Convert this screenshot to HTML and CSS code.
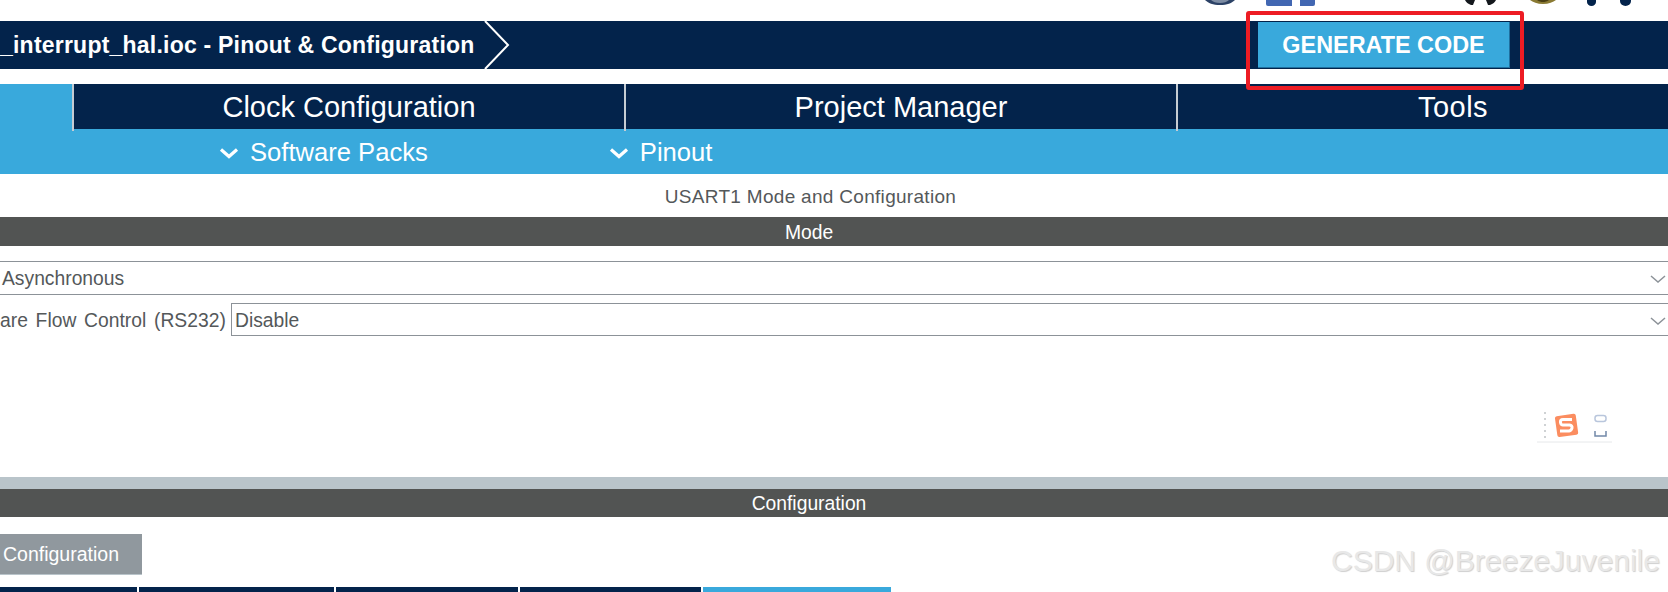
FILE: index.html
```html
<!DOCTYPE html>
<html lang="en">
<head>
<meta charset="utf-8">
<title>Pinout &amp; Configuration</title>
<link rel="stylesheet" href="styles.css">
</head>
<body>
<div class="page">
  <div class="top-icons">
    <svg class="ic ic-globe" width="30" height="5" viewBox="0 0 30 5"><path d="M0 0h30c-3 3-8 5-15 5S3 3 0 0z" fill="#2c4266"/><path d="M6 0h18c-2 2-5 3-9 3S8 2 6 0z" fill="#7d8ca3"/></svg>
    <svg class="ic ic-fb" width="49" height="6" viewBox="0 0 49 6"><path d="M0 0h26v6H2a2 2 0 0 1-2-2z" fill="#4267b2"/><path d="M34 0h15v4a2 2 0 0 1-2 2H34z" fill="#4267b2"/></svg>
    <svg class="ic ic-black" width="31" height="5" viewBox="0 0 31 5"><path d="M0 0h10L8 5H6C3 4 1 2 0 0z" fill="#14181d"/><path d="M31 0H21l2 5h2c3-1 5-3 6-5z" fill="#14181d"/></svg>
    <svg class="ic ic-gold" width="26" height="4" viewBox="0 0 26 4"><path d="M0 0h26c-3 2-7 4-13 4S3 2 0 0z" fill="#8a7a33"/><path d="M7 0h12c-2 1.500-4 2-6 2S9 1.500 7 0z" fill="#4a3f14"/></svg>
    <svg class="ic ic-dots" width="44" height="6" viewBox="0 0 44 6"><path d="M0 0h9v2a4.500 4 0 0 1-9 0z" fill="#03234b"/><path d="M33 0h11v1a5.500 5 0 0 1-11 0z" fill="#03234b"/></svg>
  </div>

  <header class="title-bar">
    <div class="crumb">_interrupt_hal.ioc - Pinout &amp; Configuration</div>
    <svg class="crumb-arrow" width="26" height="48" viewBox="0 0 26 48"><path d="M1 0l23 24L1 48" fill="none" stroke="#fff" stroke-width="2"/></svg>
    <button class="generate">GENERATE CODE</button>
  </header>

  <nav class="tabs">
    <div class="tab-active"></div>
    <div class="tab">Clock Configuration</div>
    <div class="tab">Project Manager</div>
    <div class="tab tab-tools">Tools</div>
  </nav>

  <div class="subnav">
    <div class="subnav-item sub-packs">
      <svg width="20" height="12" viewBox="0 0 20 12"><path d="M2 2.500l8 7 8-7" fill="none" stroke="#fff" stroke-width="3.200"/></svg>
      <span>Software Packs</span>
    </div>
    <div class="subnav-item sub-pinout">
      <svg width="20" height="12" viewBox="0 0 20 12"><path d="M2 2.500l8 7 8-7" fill="none" stroke="#fff" stroke-width="3.200"/></svg>
      <span>Pinout</span>
    </div>
  </div>

  <div class="panel-title">USART1 Mode and Configuration</div>
  <div class="section-bar">Mode</div>

  <div class="mode-body">
    <div class="select select-mode">
      <span>Asynchronous</span>
      <svg class="select-chev" width="16" height="8" viewBox="0 0 16 8"><path d="M1 1l7 6 7-6" fill="none" stroke="#8c9298" stroke-width="1.500"/></svg>
    </div>
    <div class="field-row">
      <label class="field-label">are Flow Control (RS232)</label>
      <div class="select select-flow">
        <span>Disable</span>
        <svg class="select-chev" width="16" height="8" viewBox="0 0 16 8"><path d="M1 1l7 6 7-6" fill="none" stroke="#8c9298" stroke-width="1.500"/></svg>
      </div>
    </div>
    <div class="ime-widget">
      <svg width="78" height="32" viewBox="0 0 78 32">
        <path d="M8 1v30" stroke="#cfd2d4" stroke-width="2" stroke-dasharray="2 4" fill="none"/>
        <path d="M0 31h75" stroke="#e6e8ea" stroke-width="1" fill="none"/>
        <rect x="19" y="4" width="21" height="21" rx="2" transform="rotate(-8 29 14)" fill="#fb8d60"/>
        <path d="M35 8.500H26q-3 0-2.500 3t3 2.500h6q3 .5 2.500 3T32 20H23" fill="none" stroke="#fff" stroke-width="3"/>
        <rect x="58" y="4.500" width="11" height="6" rx="2.500" fill="none" stroke="#b9c6dc" stroke-width="1.500"/>
        <path d="M58 20v5h11v-5" fill="none" stroke="#7288a8" stroke-width="1.500"/>
      </svg>
    </div>
  </div>

  <div class="divider"></div>
  <div class="section-bar section-config">Configuration</div>

  <div class="config-body">
    <button class="config-btn">Configuration</button>
  </div>

  <div class="bottom-tabs">
    <div class="btab btab-1"></div>
    <div class="btab btab-2"></div>
    <div class="btab btab-3"></div>
    <div class="btab btab-4"></div>
    <div class="btab btab-5"></div>
  </div>

  <div class="highlight"></div>
  <div class="watermark">CSDN @BreezeJuvenile</div>
</div>
</body>
</html>
```
FILE: styles.css
```css
* { box-sizing: border-box; }
html, body { margin: 0; padding: 0; background: #fff; }
body { font-family: "Liberation Sans", Arial, sans-serif; }

.page {
  position: relative;
  width: 1668px;
  height: 592px;
  overflow: hidden;
  background: #fff;
}

.top-icons {
  height: 21px;
  display: flex;
  align-items: flex-start;
  padding-left: 1205px;
}
.ic { display: block; flex: none; }
.ic-fb { margin-left: 31px; }
.ic-black { margin-left: 150px; }
.ic-gold { margin-left: 34px; }
.ic-dots { margin-left: 31px; }

.title-bar {
  height: 48px;
  background: #03234b;
  display: flex;
  align-items: center;
  color: #fff;
}
.crumb {
  width: 484px;
  flex: none;
  white-space: nowrap;
  font-size: 23px;
  font-weight: 700;
  letter-spacing: .22px;
}
.crumb-arrow { display: block; flex: none; }
.generate {
  margin-left: 748px;
  width: 252px;
  height: 46px;
  flex: none;
  background: #39a9dc;
  border: 0;
  border-right: 1px solid #1f6f9e;
  border-bottom: 1px solid #1f6f9e;
  color: #fff;
  font-family: inherit;
  font-size: 23.400px;
  font-weight: 700;
  padding: 2px 0 0;
}

.tabs {
  margin-top: 15px;
  height: 45px;
  display: grid;
  grid-template-columns: 72px 552px 552px 552px;
  background: #03234b;
}
.tab-active { background: #39a9dc; }
.tab {
  border-left: 2px solid #c5ccd3;
  color: #fff;
  font-size: 29px;
  line-height: 47px;
  text-align: center;
  white-space: nowrap;
}
.tab-tools { letter-spacing: .5px; }

.subnav {
  height: 45px;
  padding-top: 2px;
  background: #39a9dc;
  display: flex;
  align-items: center;
  color: #fff;
  font-size: 25.600px;
}
.subnav-item { display: flex; align-items: center; gap: 11px; }
.subnav-item svg { display: block; flex: none; }
.sub-packs { margin-left: 219px; }
.sub-pinout { margin-left: 181px; }

.panel-title {
  height: 43px;
  line-height: 46px;
  padding-right: 47px;
  text-align: center;
  color: #54585a;
  font-size: 19px;
  letter-spacing: .3px;
}

.section-bar {
  height: 29px;
  line-height: 31px;
  padding-right: 50px;
  background: #525453;
  color: #fff;
  text-align: center;
  font-size: 19.300px;
}

.mode-body {
  height: 231px;
  padding-top: 15px;
  position: relative;
}
.select {
  height: 33px;
  display: flex;
  align-items: center;
  justify-content: space-between;
  border: 1px solid #8c9298;
  color: #54585a;
  font-size: 19.300px;
  margin-right: -2px;
  padding: 2px 3px 0 3px;
}
.select-mode {
  height: 34px;
  margin-left: -2px;
  margin-bottom: 8px;
}
.field-row { display: flex; align-items: center; height: 33px; }
.field-label {
  width: 231px;
  flex: none;
  padding-right: 6px;
  padding-top: 2px;
  text-align: right;
  white-space: nowrap;
  color: #54585a;
  font-size: 19.300px;
  word-spacing: 2.400px;
}
.select-flow { flex: 1; }
.select-chev { display: block; flex: none; }

.ime-widget { position: absolute; left: 1537px; top: 165px; filter: blur(.4px); }
.ime-widget svg { display: block; }

.divider { height: 12px; background: #b9c4ca; }
.section-config { height: 28px; line-height: 30px; }

.config-body { height: 70px; padding-top: 17px; }
.config-btn {
  display: block;
  width: 142px;
  height: 41px;
  background: #90989e;
  border: 0;
  border-bottom: 1px solid #b9c4ca;
  color: #fff;
  font-family: inherit;
  font-size: 19.500px;
  padding: 0 0 0 3px;
  text-align: left;
}

.bottom-tabs { height: 5px; display: flex; }
.btab { height: 5px; background: #03234b; border-right: 2px solid #fff; flex: none; }
.btab-1 { width: 139px; }
.btab-2 { width: 197px; }
.btab-3 { width: 184px; }
.btab-4 { width: 183px; }
.btab-5 { width: 188px; background: #39a9dc; border-right: 0; }

.highlight {
  position: absolute;
  left: 1246px;
  top: 11px;
  width: 278px;
  height: 79px;
  border: 4px solid #ed1c24;
  border-radius: 3px;
}

.watermark {
  position: absolute;
  left: 1331px;
  top: 544px;
  font-size: 30px;
  line-height: 34px;
  color: #e8e8e8;
  text-shadow: 1px 1px 1px #cfcfcf;
  white-space: nowrap;
}
```
